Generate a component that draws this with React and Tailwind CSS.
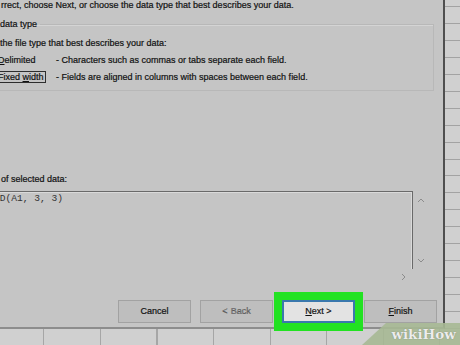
const SANS = "font-['Liberation_Sans',Arial,sans-serif]";

function Chevron({ dir }) {
  const pts = { up: "1,5 4,2 7,5", down: "1,3 4,6 7,3", right: "2,1 5,4 2,7" }[dir];
  return (
    <svg width="8" height="8" viewBox="0 0 8 8" className="block">
      <polyline points={pts} fill="none" stroke="#8c8c8c" strokeWidth="1" />
    </svg>
  );
}

function WizardButton({ children, primary, disabled }) {
  if (primary) {
    return (
      <button className="flex h-[23px] w-[73px] items-center justify-center border-2 border-[#3a78ad] bg-[#e3e3e3] text-[9px] leading-none text-[#111] outline-8 outline-[#22e222]">
        {children}
      </button>
    );
  }
  return (
    <button
      className={
        "flex h-[23px] w-[73px] items-center justify-center border border-[#a2a2a2] bg-[#bebebe] text-[9px] leading-none " +
        (disabled ? "text-[#8e8e8e]" : "text-[#111]")
      }
    >
      {children}
    </button>
  );
}

export default function App() {
  return (
    <div className="relative h-[345px] w-[460px] overflow-hidden bg-[#d0d0d0] bg-[image:repeating-linear-gradient(180deg,transparent_0,transparent_6.5px,#a3a3a3_6.5px,#a3a3a3_7.5px,transparent_7.5px,transparent_16.9px),repeating-linear-gradient(90deg,transparent_0,transparent_43.5px,#a6a6a6_43.5px,#a6a6a6_44.5px,transparent_44.5px,transparent_56.5px)]">
      <div className={"flex h-[329px] w-[445px] flex-col border-r-2 border-b-2 border-r-[#4f4f4f] border-b-[#8d8d8d] bg-[#c5c5c5] text-[9px] text-[#111] [-webkit-text-stroke:0.2px_#111] " + SANS}>
        <p className="mt-[-1px] h-[12px] pl-[1px] leading-[12px]">
          rrect, choose Next, or choose the data type that best describes your data.
        </p>

        <fieldset className="mt-[7px] ml-[-5px] h-[73px] w-[439px] border border-[#b8b8b8] pl-[4px] shadow-[inset_1px_1px_0_#d4d4d4]">
          <legend className="pr-[3px] leading-[12px]">data type</legend>
          <p className="mt-[7px] h-[12px] leading-[12px]">the file type that best describes your data:</p>
          <div className="mt-[5px] grid h-[12px] grid-cols-[56px_1fr] leading-[12px]">
            <span className="ml-[-2px]">
              <span className="underline">D</span>elimited
            </span>
            <span>- Characters such as commas or tabs separate each field.</span>
          </div>
          <div className="mt-[5px] grid h-[12px] grid-cols-[56px_1fr] items-center leading-[12px]">
            <span className="ml-[-3px] inline-block h-[12px] w-fit border border-[#2e2e2e] pr-[1px] leading-[10px]">
              Fixed <span className="underline">w</span>idth
            </span>
            <span>- Fields are aligned in columns with spaces between each field.</span>
          </div>
        </fieldset>

        <p className="mt-[82px] h-[12px] pl-[1px] leading-[12px]">of selected data:</p>

        <div className="mt-[6px] flex items-start">
          <div className="ml-[-4px] w-[417px]">
            <div className="h-[78px] border-t border-r border-[#6a6a6a] pt-[1px] shadow-[inset_-1px_1px_0_#dadada]">
              <p className="ml-[-2px] font-['Liberation_Mono','Courier_New',monospace] text-[9.6px] leading-[12px] text-[#333] [-webkit-text-stroke:0px]">
                ID(A1, 3, 3)
              </p>
            </div>
            <div className="flex h-[15px] items-center justify-end pr-[5px]">
              <Chevron dir="right" />
            </div>
          </div>
          <div className="flex h-[78px] w-[15px] flex-col justify-between pt-[6px] pb-[5px] pl-[4px]">
            <Chevron dir="up" />
            <Chevron dir="down" />
          </div>
        </div>

        <div className="mt-auto mb-[4px] flex justify-end gap-[9px] pr-[6px]">
          <WizardButton>Cancel</WizardButton>
          <WizardButton disabled>
            &lt; <span className="ml-[3px]">Back</span>
          </WizardButton>
          <WizardButton primary>
            <span className="underline">N</span>ext &gt;
          </WizardButton>
          <WizardButton>
            <span className="underline">F</span>inish
          </WizardButton>
        </div>
      </div>

      <div className="absolute right-0 bottom-0 flex h-[22px] w-[98px] items-end justify-end bg-[#a6b894]/90 pr-[4px] pb-[4px] [clip-path:polygon(24px_0,100%_0,100%_100%,0_100%)]">
        <span className="font-['DejaVu_Serif',serif] text-[13.5px] leading-none font-bold text-[#ececec] [text-shadow:0_0_1px_rgba(0,0,0,0.35)]">
          wikiHow
        </span>
      </div>
    </div>
  );
}
